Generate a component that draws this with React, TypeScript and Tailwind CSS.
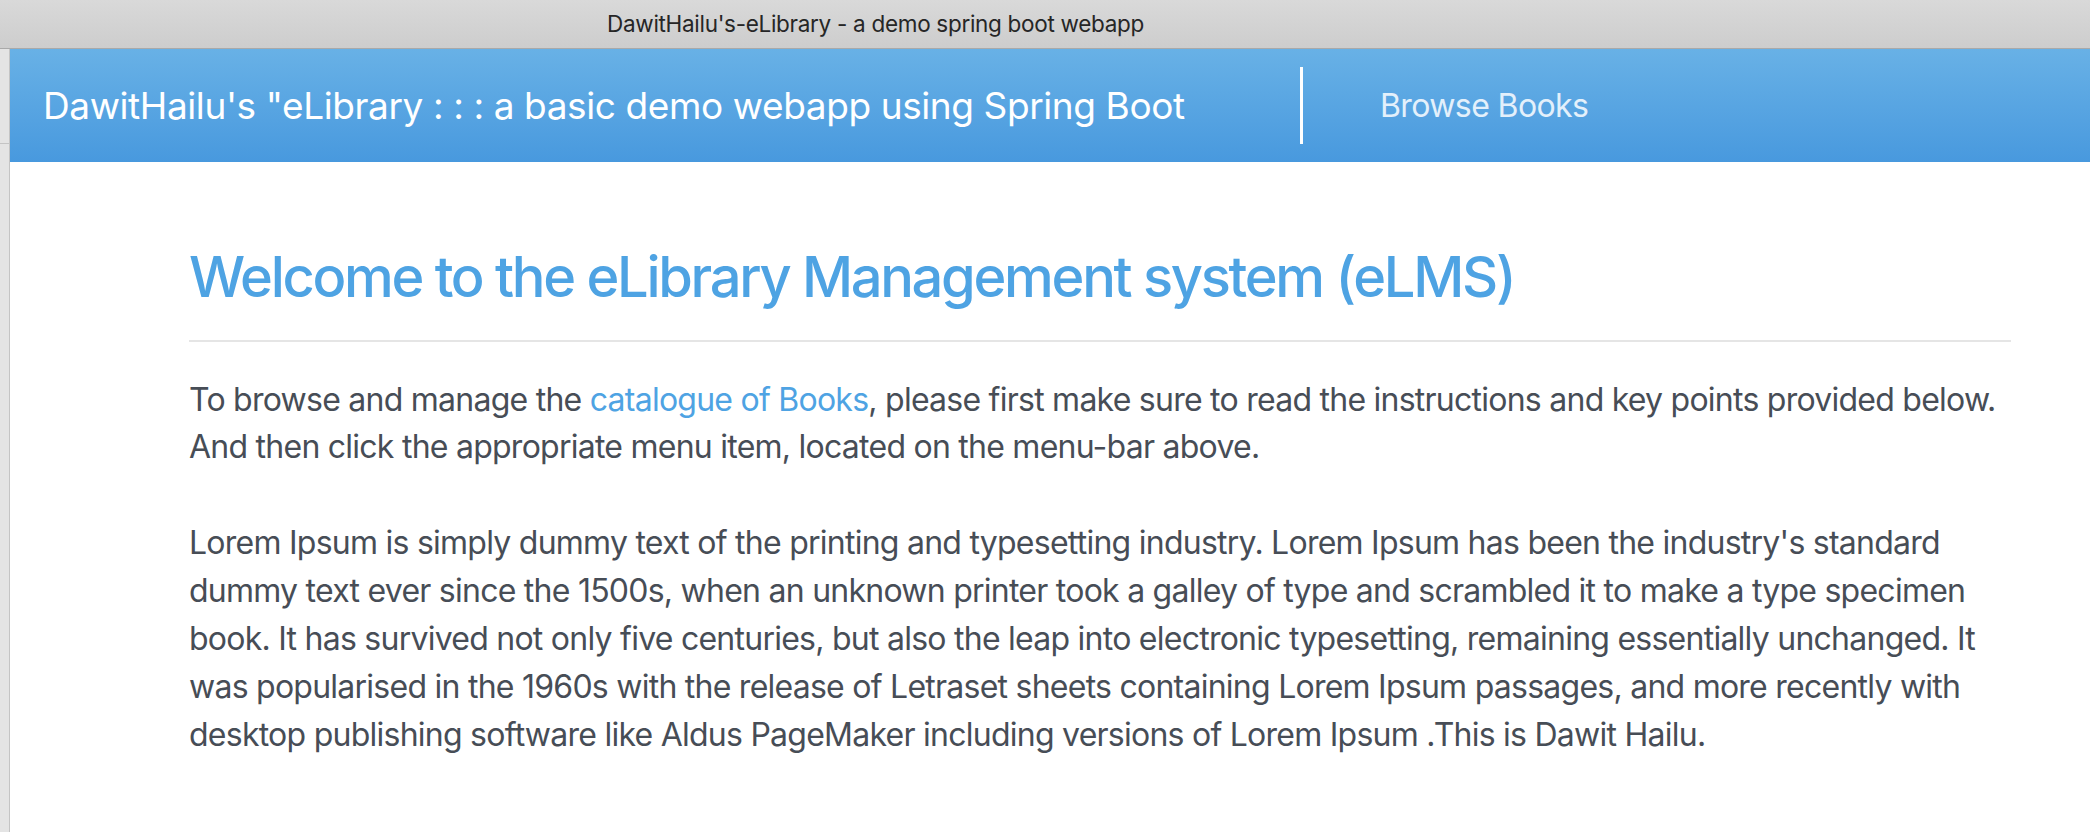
export default function App() {
  return (
    <div className="w-[2090px] h-[832px] overflow-hidden bg-white flex flex-col font-['Inter','Noto_Sans',sans-serif]">
      {/* Window title bar */}
      <div className="h-[49px] shrink-0 bg-gradient-to-b from-[#d9d9d9] to-[#cdcdcd] border-b border-[#a9a9a9] flex items-center pl-[607px]">
        <span className="text-[22.5px] text-[#262626] tracking-[-0.3px]">
          DawitHailu's-eLibrary - a demo spring boot webapp
        </span>
      </div>

      <div className="flex flex-1">
        {/* Left edge of side panel */}
        <div className="w-[10px] shrink-0 bg-[#e4e4e4] border-r border-[#c4c4c4] flex flex-col">
          <div className="h-[95px] border-b border-[#c4c4c4]" />
        </div>

        <div className="flex-1 flex flex-col">
          {/* Navbar */}
          <header className="h-[113px] shrink-0 bg-gradient-to-b from-[#68b1e6] to-[#4899de] flex items-center">
            <div className="w-[1290px] pl-[33px] text-[37px] text-white tracking-[-0.4px]">
              DawitHailu's "eLibrary : : : a basic demo webapp using Spring Boot
            </div>
            <div className="w-[3px] h-[77px] bg-white" />
            <a className="ml-[77px] text-[32px] text-[#e3f0fb] tracking-[-0.6px]">Browse Books</a>
          </header>

          {/* Content */}
          <main className="pl-[179px] pr-[79px]">
            <h2 className="mt-[84px] text-[56px] leading-[62px] font-medium text-[#4ea3e3] tracking-[-2.3px]">
              Welcome to the eLibrary Management system (eLMS)
            </h2>
            <hr className="mt-[32px] border-t-2 border-[#e5e5e5]" />
            <p className="mt-[34px] whitespace-nowrap text-[32px] leading-[47px] text-[#474d56] tracking-[-0.75px]">
              To browse and manage the <a className="text-[#4ea3e3]">catalogue of Books</a>, please first make sure to
              read the instructions and key points provided below.
              <br />
              And then click the appropriate menu item, located on the menu-bar above.
            </p>
            <p className="mt-[49px] whitespace-nowrap text-[32px] leading-[48px] text-[#474d56] tracking-[-0.75px]">
              Lorem Ipsum is simply dummy text of the printing and typesetting industry. Lorem Ipsum has been the
              industry's standard
              <br />
              dummy text ever since the 1500s, when an unknown printer took a galley of type and scrambled it to make a
              type specimen
              <br />
              book. It has survived not only five centuries, but also the leap into electronic typesetting, remaining
              essentially unchanged. It
              <br />
              was popularised in the 1960s with the release of Letraset sheets containing Lorem Ipsum passages, and more
              recently with
              <br />
              desktop publishing software like Aldus PageMaker including versions of Lorem Ipsum .This is Dawit Hailu.
            </p>
          </main>
        </div>
      </div>
    </div>
  );
}
